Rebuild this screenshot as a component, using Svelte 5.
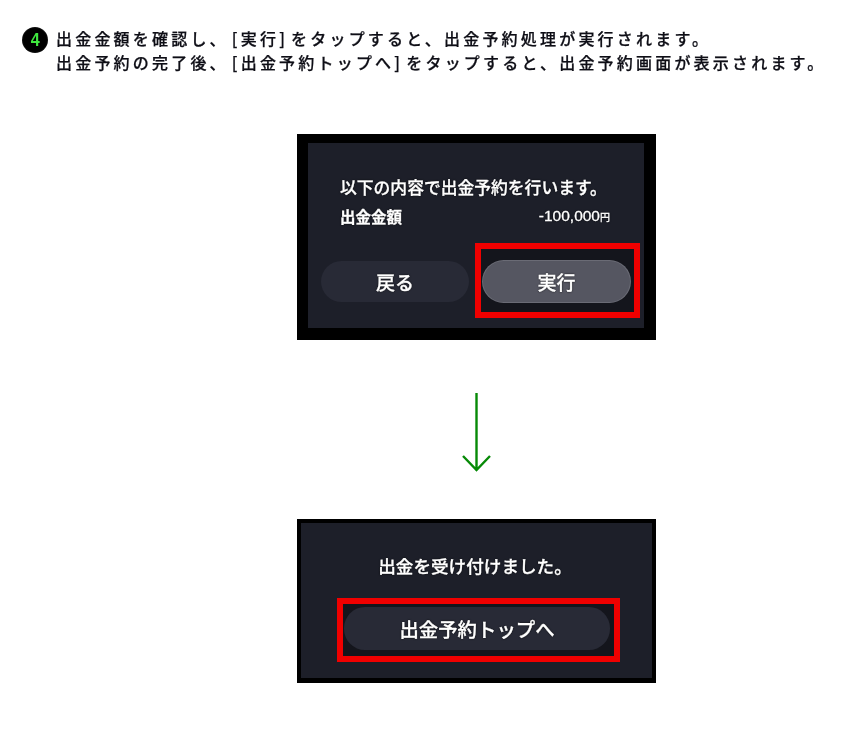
<script>
  const lines = [
    { before: '出金金額を確認し、', inside: '実行', after: 'をタップすると、出金予約処理が実行されます。' },
    { before: '出金予約の完了後、', inside: '出金予約トップへ', after: 'をタップすると、出金予約画面が表示されます。' }
  ];
</script>

<main class="page">
  <header class="intro">
    <span class="badge"><span class="digit">4</span></span>
    <div class="copy">
      {#each lines as line}
        <p>{line.before}<span class="open">[</span>{line.inside}<span class="close">]</span>{line.after}</p>
      {/each}
    </div>
  </header>

  <section class="card first">
    <div class="inner inner-first">
      <p class="title">以下の内容で出金予約を行います。</p>
      <div class="amount">
        <span>出金金額</span>
        <span class="value">-100,000<small>円</small></span>
      </div>
      <div class="actions">
        <div class="btn back">戻る</div>
        <div class="frame frame-run">
          <div class="btn run">実行</div>
        </div>
      </div>
    </div>
  </section>

  <svg class="arrow" width="32" height="82" viewBox="0 0 32 82" aria-hidden="true">
    <path d="M15.5 1V78M2 64L15.5 78L29 64" fill="none" stroke="#078a07" stroke-width="2.4" />
  </svg>

  <section class="card second">
    <div class="inner inner-second">
      <p class="done">出金を受け付けました。</p>
      <div class="frame frame-top">
        <div class="btn top">出金予約トップへ</div>
      </div>
    </div>
  </section>
</main>

<style>
  :global(body) {
    margin: 0;
    background: #fff;
  }

  .page {
    width: 860px;
    height: 748px;
    box-sizing: border-box;
    padding-top: 26px;
    display: flex;
    flex-direction: column;
    font-family: "Noto Sans CJK JP", "Noto Sans", sans-serif;
    text-spacing-trim: space-all;
    overflow: hidden;
  }

  p {
    margin: 0;
  }

  .intro {
    display: flex;
    gap: 8px;
    padding-left: 22px;
    height: 50px;
  }

  .badge {
    width: 26px;
    height: 26px;
    margin-top: 1px;
    flex: none;
    display: flex;
    align-items: center;
    justify-content: center;
    border-radius: 50%;
    background: radial-gradient(circle, #000 62%, #4a4a4a 100%);
    filter: blur(0.4px);
  }

  .digit {
    display: block;
    color: #3fe83f;
    font: 700 19px/26px "Liberation Sans", sans-serif;
    transform: scaleX(0.85);
  }

  .copy {
    color: #0e0e16;
    font-size: 16px;
    font-weight: 500;
    line-height: 24px;
    letter-spacing: 3.2px;
    white-space: nowrap;
    -webkit-text-stroke: 0.25px #0e0e16;
    filter: blur(0.4px);
  }

  .open {
    margin-left: 3px;
  }

  .close {
    margin-right: 3px;
  }

  .card {
    width: 359px;
    box-sizing: border-box;
    margin-left: 297px;
    background: #000;
    color: #fff;
    flex: none;
  }

  .first {
    height: 206px;
    margin-top: 58px;
    padding: 9px 12px 12px 11px;
  }

  .second {
    height: 164px;
    padding: 4px 4px 5px 4px;
  }

  .inner {
    height: 100%;
    box-sizing: border-box;
    background: #1d1f29;
    filter: blur(0.4px);
    text-shadow: 0 0 2px #000;
    -webkit-text-stroke: 0.3px #fff;
  }

  .inner-first {
    padding: 32px 4px 0 13px;
    display: flex;
    flex-direction: column;
  }

  .title {
    padding-left: 19px;
    font-size: 16.8px;
    font-weight: 500;
    line-height: 24px;
    white-space: nowrap;
  }

  .amount {
    display: flex;
    justify-content: space-between;
    margin-top: 7px;
    padding: 0 30px 0 19px;
    font-size: 15.5px;
    font-weight: 700;
    line-height: 20px;
  }

  .value {
    font-family: "Liberation Sans", sans-serif;
    font-size: 15.5px;
    font-weight: 400;
  }

  .value small {
    font-family: "Noto Sans CJK JP", sans-serif;
    font-size: 10px;
  }

  .actions {
    display: flex;
    gap: 6px;
    margin-top: 16px;
  }

  .btn {
    display: flex;
    align-items: center;
    justify-content: center;
    border-radius: 21px;
    background: #282a36;
    font-size: 19px;
    font-weight: 500;
  }

  .back {
    width: 148px;
    height: 41px;
    margin-top: 18px;
  }

  .frame {
    box-sizing: border-box;
    border: 6px solid #f00000;
    background: #14151c;
  }

  .frame-run {
    width: 165px;
    height: 75px;
    padding: 12px 0 0 2px;
  }

  .run {
    width: 147px;
    height: 41px;
    background: #555661;
    box-shadow: 0 0 0 1px #6a6b75;
  }

  .inner-second {
    padding-top: 30px;
    display: flex;
    flex-direction: column;
    align-items: center;
  }

  .done {
    margin-right: 3px;
    font-size: 17.6px;
    font-weight: 500;
    line-height: 26px;
    white-space: nowrap;
  }

  .frame-top {
    width: 283px;
    height: 64px;
    margin-top: 19px;
    margin-left: 4px;
    padding: 3px 0 0 1px;
  }

  .top {
    width: 266px;
    height: 43px;
    font-size: 19.4px;
  }

  .arrow {
    display: block;
    margin: 52px 0 45px 461px;
    flex: none;
  }
</style>
